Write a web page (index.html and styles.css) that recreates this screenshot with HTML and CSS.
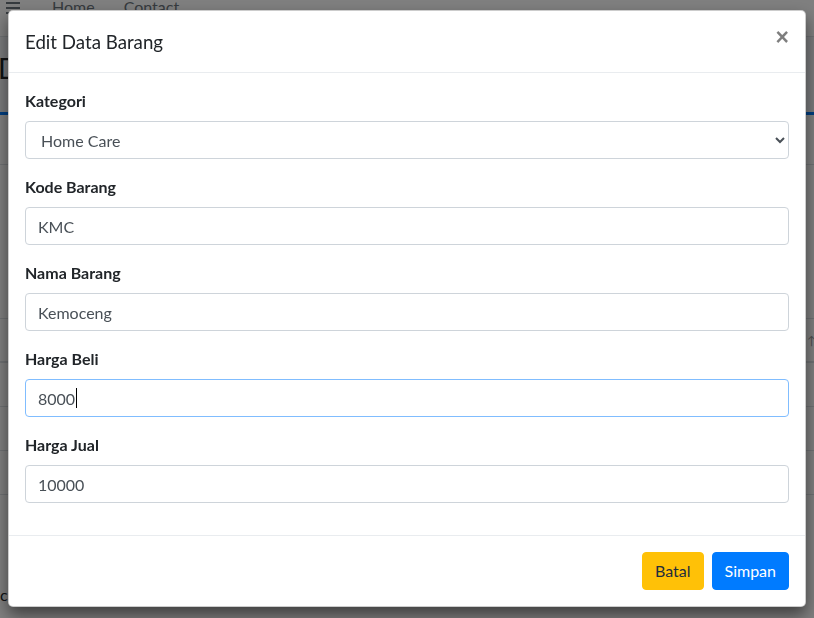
FILE: index.html
```html
<!DOCTYPE html>
<html lang="id">
<head>
<meta charset="utf-8">
<title>Edit Data Barang</title>
<link rel="stylesheet" href="styles.css">
</head>
<body>
<div class="page">
  <nav class="navbar">
    <span class="burger"><i></i><i></i><i></i></span>
    <a class="nav-link">Home</a>
    <a class="nav-link">Contact</a>
  </nav>
  <div class="content-header"><h1>D</h1></div>
  <div class="card">
    <div class="card-head"></div>
    <div class="toolbar"></div>
    <div class="thead"><span class="sort">&#8593;</span></div>
    <div class="trow"></div>
    <div class="trow"></div>
    <div class="trow"></div>
    <div class="foot-text">c</div>
  </div>
</div>
<div class="backdrop"></div>
<div class="modal">
  <div class="modal-content">
    <div class="modal-header">
      <h4 class="modal-title">Edit Data Barang</h4>
      <button class="close" type="button">&times;</button>
    </div>
    <div class="modal-body">
      <div class="form-group">
        <label>Kategori</label>
        <select class="form-control select">
          <option>Home Care</option>
        </select>
      </div>
      <div class="form-group">
        <label>Kode Barang</label>
        <input class="form-control" type="text" value="KMC">
      </div>
      <div class="form-group">
        <label>Nama Barang</label>
        <input class="form-control" type="text" value="Kemoceng">
      </div>
      <div class="form-group">
        <label>Harga Beli</label>
        <div class="field">
          <input class="form-control focused" type="text" value="8000">
          <span class="caret-mirror">8000<i class="caret"></i></span>
        </div>
      </div>
      <div class="form-group">
        <label>Harga Jual</label>
        <input class="form-control" type="text" value="10000">
      </div>
    </div>
    <div class="modal-footer">
      <button class="btn btn-warning" type="button">Batal</button>
      <button class="btn btn-primary" type="button">Simpan</button>
    </div>
  </div>
</div>
</body>
</html>
```

FILE: styles.css
```css
* { box-sizing: border-box; }
html, body { margin: 0; padding: 0; }
body {
  font-family: "Lato", "Liberation Sans", sans-serif;
  font-size: 16px;
  color: #212529;
  background: #f4f6f9;
  width: 814px;
  height: 618px;
  overflow: hidden;
}

/* background page */
.page { height: 618px; }
.navbar {
  height: 37px;
  background: #fff;
  border-bottom: 1px solid #dee2e6;
  display: flex;
  align-items: flex-start;
  padding: 0 0 0 6px;
}
.burger { display: flex; flex-direction: column; gap: 3px; width: 14px; margin-top: 2px; }
.burger i { display: block; height: 2px; background: #6c757d; }
.nav-link { color: #6c757d; line-height: 20px; margin-left: 32px; margin-top: -3px; }
.nav-link + .nav-link { margin-left: 29px; }
.content-header { padding: 14px 0 0 0; height: 75px; }
.content-header h1 { margin: 0; font-size: 28px; font-weight: 400; color: #212529; line-height: 34px; margin-left: -2px; }
.card {
  background: #fff;
  border-top: 3px solid #007bff;
  height: 506px;
}
.card-head { height: 50px; border-bottom: 1px solid #dee2e6; }
.toolbar { height: 153px; }
.thead { height: 45px; border-top: 1px solid #dee2e6; border-bottom: 2px solid #dee2e6; display: flex; justify-content: flex-end; align-items: center; color: #999; }
.sort { font-size: 12px; margin-right: -2px; }
.trow { height: 44px; border-bottom: 1px solid #dee2e6; }
.foot-text { padding-top: 90px; font-size: 16px; }

.backdrop {
  position: fixed;
  inset: 0;
  background: #000;
  opacity: .5;
}

/* modal */
.modal {
  position: fixed;
  inset: 0;
  padding: 10px 8px 0 8px;
}
.modal-content {
  background: #fff;
  border: 1px solid rgba(0,0,0,.2);
  border-radius: 5px;
  box-shadow: 0 .5rem 1rem rgba(0,0,0,.5);
  width: 798px;
  display: flex;
  flex-direction: column;
}
.modal-header {
  display: flex;
  align-items: flex-start;
  justify-content: space-between;
  padding: 16px 16px 15px 16px;
  border-bottom: 1px solid #e9ecef;
}
.modal-title {
  margin: 0;
  font-size: 18.7px;
  font-weight: 400;
  line-height: 30px;
  color: #212529;
}
.close {
  background: none;
  border: 0;
  padding: 0;
  margin: -5px 0 0 0;
  font-family: "Liberation Sans", sans-serif;
  font-size: 23px;
  font-weight: 700;
  line-height: 30px;
  color: #000;
  opacity: .5;
}
.modal-body { padding: 16px; }
.form-group { margin-bottom: 16px; display: flex; flex-direction: column; }
.form-group:last-child { margin-bottom: 16px; }
label {
  font-weight: 700;
  line-height: 24px;
  margin-bottom: 8px;
  color: #212529;
}
.form-control {
  display: block;
  width: 100%;
  height: 38px;
  padding: 6px 12px;
  font-family: inherit;
  font-size: 16px;
  line-height: 24px;
  color: #495057;
  background: #fff;
  border: 1px solid #ced4da;
  border-radius: 4px;
  outline: none;
}
.select { padding-left: 11px; }
.field { position: relative; }
.form-control.focused { border-color: #80bdff; }
.caret-mirror {
  position: absolute;
  left: 13px;
  top: 7px;
  font-size: 16px;
  line-height: 24px;
  color: transparent;
  pointer-events: none;
  display: flex;
  align-items: center;
}
.caret { display: inline-block; width: 1px; height: 20px; background: #000; margin-left: 1px; }
.modal-footer {
  display: flex;
  justify-content: flex-end;
  align-items: center;
  padding: 12px;
  border-top: 1px solid #e9ecef;
}
.btn {
  font-family: inherit;
  font-size: 16px;
  line-height: 24px;
  padding: 6px 12px;
  border: 1px solid transparent;
  border-radius: 4px;
  margin: 4px;
}
.btn-warning { background: #ffc107; border-color: #ffc107; color: #1f2d3d; }
.btn-primary { background: #007bff; border-color: #007bff; color: #fff; }
```
